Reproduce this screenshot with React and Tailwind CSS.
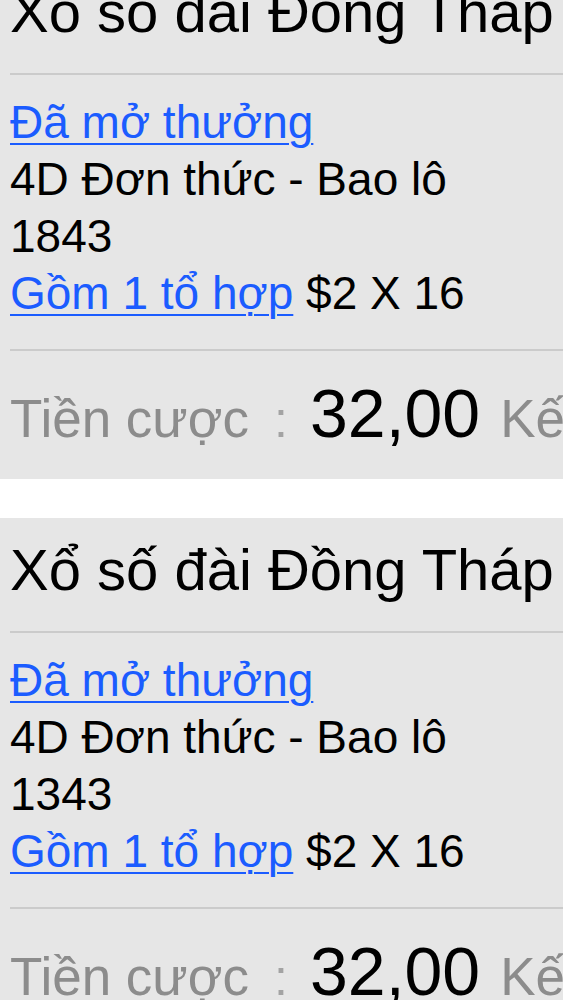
import React from 'react';

const bets = [
  { id: 1, station: 'Xổ số đài Đồng Tháp', status: 'Đã mở thưởng', type: '4D Đơn thức - Bao lô', number: '1843', combos: 'Gồm 1 tổ hợp', price: '$2 X 16', amount: '32,00' },
  { id: 2, station: 'Xổ số đài Đồng Tháp', status: 'Đã mở thưởng', type: '4D Đơn thức - Bao lô', number: '1343', combos: 'Gồm 1 tổ hợp', price: '$2 X 16', amount: '32,00' },
];

const BetCard = ({ bet }) => (
  <div className="bg-[#e6e6e6] pl-[10px] overflow-hidden whitespace-nowrap">
    {/* Title */}
    <div className="pt-[18px] text-[58px] leading-[68px] text-black">{bet.station}</div>
    <div className="mt-[27px] h-[2px] bg-[#cbcbcb]" />

    {/* Details */}
    <div className="pt-[19px] text-[46px] leading-[57px] text-black">
      <div>
        <a href="#" className="text-[#1b5cff] underline decoration-2 underline-offset-[5px]">{bet.status}</a>
      </div>
      <div>{bet.type}</div>
      <div>{bet.number}</div>
      <div>
        <a href="#" className="text-[#1b5cff] underline decoration-2 underline-offset-[5px]">{bet.combos}</a>{' '}
        <span>{bet.price}</span>
      </div>
    </div>
    <div className="mt-[27px] h-[2px] bg-[#cbcbcb]" />

    {/* Amount */}
    <div className="pt-[28px] pb-[32px] flex items-baseline leading-none">
      <span className="text-[53px] text-[#8c8c8c]">Tiền cược</span>
      <span className="text-[50px] text-[#a3a3a3] ml-[25px] mr-[22px]">:</span>
      <span className="text-[68px] text-black">{bet.amount}</span>
      <span className="text-[53px] text-[#8c8c8c] ml-[20px]">Kết quả</span>
    </div>
  </div>
);

export default function App() {
  return (
    <div className="w-[563px] h-[1000px] overflow-hidden bg-white" style={{ fontFamily: '"Liberation Sans", Arial, sans-serif' }}>
      <div className="-mt-[40px] flex flex-col gap-[39px]">
        {bets.map((bet) => (
          <BetCard key={bet.id} bet={bet} />
        ))}
      </div>
    </div>
  );
}
